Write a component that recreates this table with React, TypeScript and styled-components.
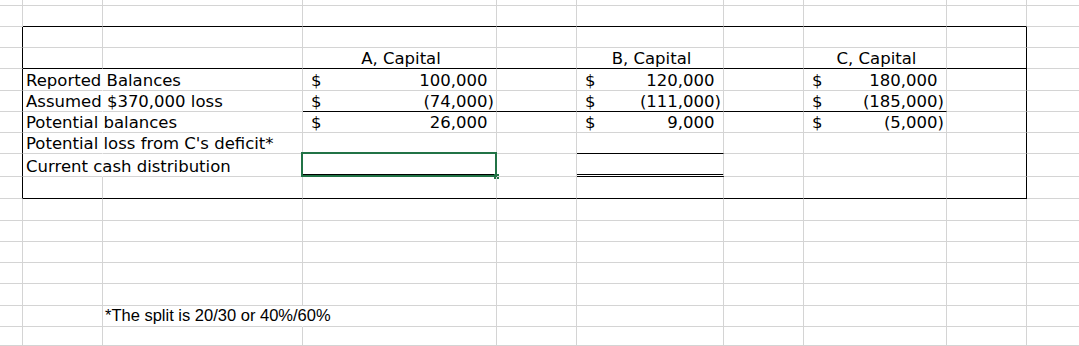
import React from "react";
import styled, {createGlobalStyle} from "styled-components";

const GlobalStyle = createGlobalStyle`
  html, body {
    margin: 0;
    padding: 0;
    background: #ffffff;
    overflow: hidden;
  }
`;

type Edge = "grid" | "thin" | "double" | "hidden";
type Align = "left" | "center" | "right" | "split";

const colWidths = [23, 80, 200, 194, 80, 147, 80, 143, 80, 80];
const rowHeights = [6, 21, 21, 21, 22, 21, 21, 21, 23, 22, 22, 21, 21, 21, 22, 21, 19];

const edge = (kind: Edge) => {
    if (kind === "thin") return "1px solid #000000";
    if (kind === "double") return "3px double #000000";
    if (kind === "hidden") return "1px solid transparent";
    return "1px solid #d4d4d4";
};

const Sheet = styled.div`
  display: grid;
  grid-template-columns: ${colWidths.map(w => w + "px").join(" ")};
  grid-template-rows: ${rowHeights.map(h => h + "px").join(" ")};
  background: #ffffff;
  font-family: "DejaVu Sans", Verdana, sans-serif;
  font-size: 16.5px;
  line-height: 19px;
  color: #000000;
`;

const Cell = styled.div<{ $bottom: Edge; $right: Edge; $align: Align; $note?: boolean }>`
  position: relative;
  box-sizing: border-box;
  display: flex;
  align-items: flex-end;
  justify-content: ${p => p.$align === "center" ? "center" : p.$align === "right" ? "flex-end" : p.$align === "split" ? "space-between" : "flex-start"};
  padding: ${p => p.$align === "split" ? "0 2px 0 8px" : p.$note ? "0 0 1px 2px" : "0 0 0 3px"};
  border-bottom: ${p => edge(p.$bottom)};
  border-right: ${p => edge(p.$right)};
  white-space: nowrap;
  overflow: visible;
  font-family: ${p => p.$note ? "\"Liberation Sans\", Arial, sans-serif" : "inherit"};
`;

const Phantom = styled.span`
  visibility: hidden;
`;

// green frame of the active cell, drawn over the cell edges
const Selection = styled.div`
  position: absolute;
  left: -2px;
  top: -2px;
  right: -1px;
  bottom: -3px;
  border: 2px solid #217346;
  pointer-events: none;

  &::after {
    content: "";
    position: absolute;
    right: -4px;
    bottom: -4px;
    width: 5px;
    height: 5px;
    background: #217346;
  }
`;

const labels = [
    "Reported Balances",
    "Assumed $370,000 loss",
    "Potential balances",
    "Potential loss from C's deficit*",
    "Current cash distribution",
];

const partners = [
    {col: 3, name: "A, Capital", values: [100000, -74000, 26000]},
    {col: 5, name: "B, Capital", values: [120000, -111000, 9000]},
    {col: 7, name: "C, Capital", values: [180000, -185000, -5000]},
];

const fmt = (n: number) => Math.abs(n).toLocaleString("en-US");

function Amount({value}: { value: number }) {
    return <>
        <span>$</span>
        <span>{value < 0 ? `(${fmt(value)})` : <>{fmt(value)}<Phantom>)</Phantom></>}</span>
    </>;
}

const inside = (n: number, a: number, b: number) => n >= a && n <= b;

function bottomEdge(r: number, c: number): Edge {
    if ((r === 1 || r === 3 || r === 9) && inside(c, 1, 8)) return "thin";
    if (r === 5 && inside(c, 3, 7)) return "thin";
    if (r === 7 && (c === 3 || c === 5)) return "thin";
    if (r === 8 && (c === 3 || c === 5)) return "double";
    return "grid";
}

function rightEdge(r: number, c: number): Edge {
    if ((c === 0 || c === 8) && inside(r, 2, 9)) return "thin";
    if (c === 1 && inside(r, 4, 8)) return "hidden";
    if (c === 2 && r === 15) return "hidden";
    return "grid";
}

function cellContent(r: number, c: number): { node: React.ReactNode; align: Align; note?: boolean } {
    if (c === 1 && inside(r, 4, 8)) return {node: labels[r - 4], align: "left"};
    if (c === 2 && r === 15) return {node: "*The split is 20/30 or 40%/60%", align: "left", note: true};
    const partner = partners.find(p => p.col === c);
    if (partner && r === 3) return {node: partner.name, align: "center"};
    if (partner && inside(r, 4, 6)) return {node: <Amount value={partner.values[r - 4]}/>, align: "split"};
    return {node: null, align: "left"};
}

const App = () => {
    return (<>
        <GlobalStyle/>
        <Sheet>
            {rowHeights.map((_, r) => colWidths.map((__, c) => {
                const {node, align, note} = cellContent(r, c);
                return <Cell key={`${r}-${c}`}
                             $bottom={bottomEdge(r, c)}
                             $right={rightEdge(r, c)}
                             $align={align}
                             $note={note}>
                    {node}
                    {r === 8 && c === 3 && <Selection/>}
                </Cell>;
            }))}
        </Sheet>
    </>);
};

export default App;
